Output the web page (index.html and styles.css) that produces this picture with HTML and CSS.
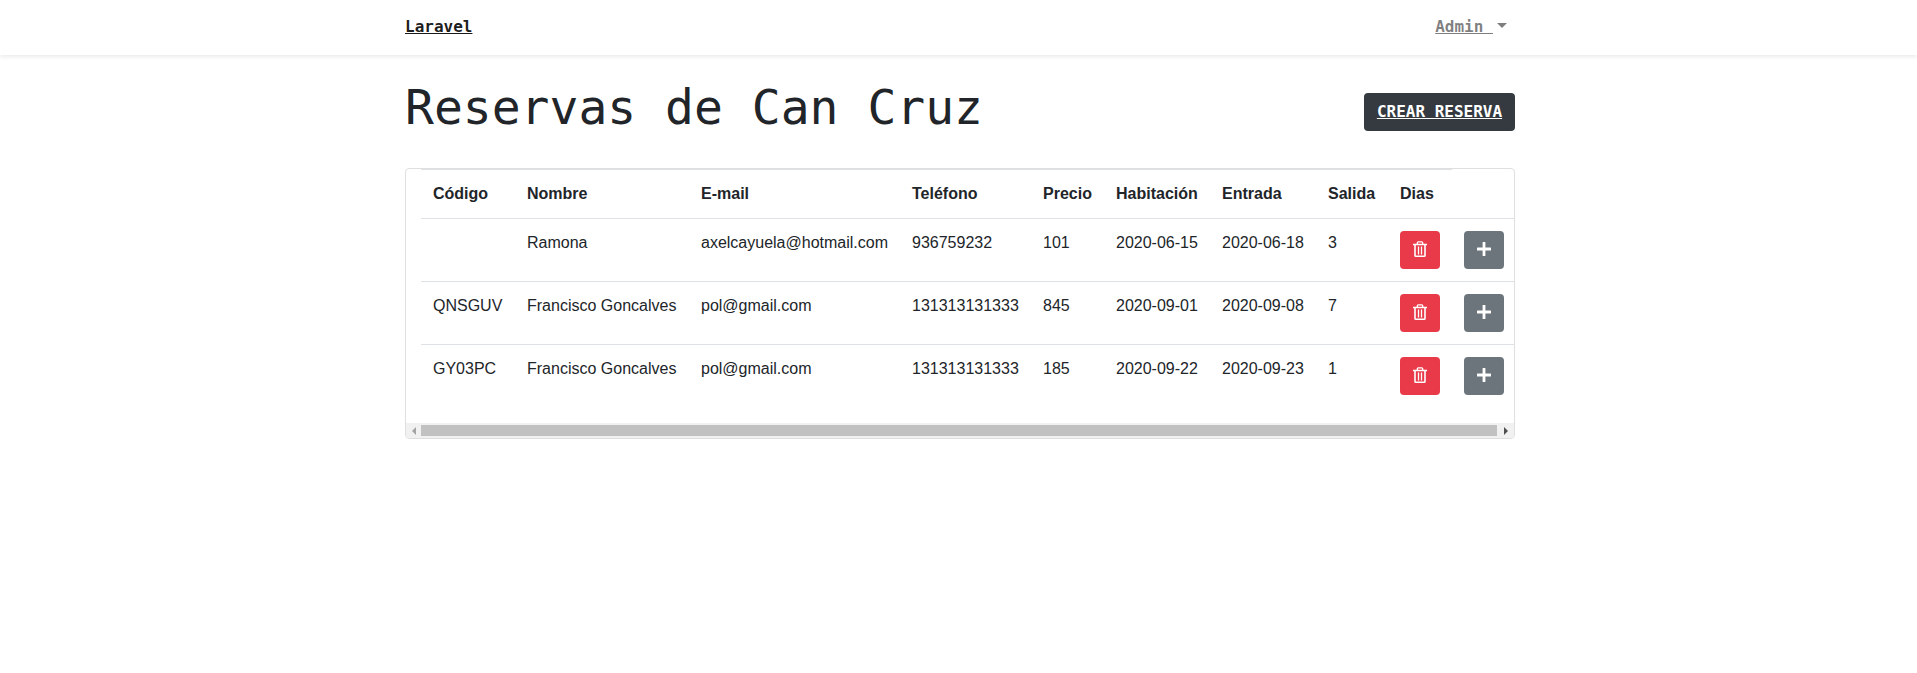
FILE: index.html
```html
<!DOCTYPE html>
<html lang="es">
<head>
<meta charset="utf-8">
<title>Laravel</title>
<link rel="stylesheet" href="styles.css">
</head>
<body>
<svg class="sprite" aria-hidden="true">
  <symbol id="trash" viewBox="0 0 14 16">
    <path d="M4.3 3V1.8q0-.9.9-.9h3.6q.9 0 .9.9V3" fill="none" stroke="currentColor" stroke-width="1.3"/>
    <path d="M0 3.5h14M2 3.5v11q0 .7.8.7h8.4q.8 0 .8-.7v-11" fill="none" stroke="currentColor" stroke-width="1.6"/>
    <path d="M5.5 5.5v8M8.5 5.5v8" fill="none" stroke="currentColor" stroke-width="1.3"/>
  </symbol>
  <symbol id="plus" viewBox="0 0 14 14">
    <path d="M7 .8v12.4M.8 7h12.4" fill="none" stroke="currentColor" stroke-width="2.8" stroke-linecap="round"/>
  </symbol>
</svg>
<nav class="navbar">
  <div class="container navbar-inner">
    <a class="brand" href="#">Laravel</a>
    <a class="user" href="#">Admin <span class="caret"></span></a>
  </div>
</nav>
<main class="container">
  <header class="page-header">
    <h1>Reservas de Can Cruz</h1>
    <a class="btn btn-dark" href="#">CREAR RESERVA</a>
  </header>
  <section class="card">
    <div class="table-area">
      <table>
        <colgroup>
          <col class="c-code"><col class="c-name"><col class="c-mail"><col class="c-phone"><col class="c-price"><col class="c-room"><col class="c-in"><col class="c-out"><col class="c-days"><col class="c-more">
        </colgroup>
        <thead>
          <tr><th>Código</th><th>Nombre</th><th>E-mail</th><th>Teléfono</th><th>Precio</th><th>Habitación</th><th>Entrada</th><th>Salida</th><th>Dias</th></tr>
        </thead>
        <tbody>
          <tr><td></td><td>Ramona</td><td>axelcayuela@hotmail.com</td><td>936759232</td><td>101</td><td>2020-06-15</td><td>2020-06-18</td><td>3</td><td><button class="btn btn-danger"><svg class="i-trash"><use href="#trash"/></svg></button></td><td><button class="btn btn-more"><svg class="i-plus"><use href="#plus"/></svg></button></td></tr>
          <tr><td>QNSGUV</td><td>Francisco Goncalves</td><td>pol@gmail.com</td><td>131313131333</td><td>845</td><td>2020-09-01</td><td>2020-09-08</td><td>7</td><td><button class="btn btn-danger"><svg class="i-trash"><use href="#trash"/></svg></button></td><td><button class="btn btn-more"><svg class="i-plus"><use href="#plus"/></svg></button></td></tr>
          <tr><td>GY03PC</td><td>Francisco Goncalves</td><td>pol@gmail.com</td><td>131313131333</td><td>185</td><td>2020-09-22</td><td>2020-09-23</td><td>1</td><td><button class="btn btn-danger"><svg class="i-trash"><use href="#trash"/></svg></button></td><td><button class="btn btn-more"><svg class="i-plus"><use href="#plus"/></svg></button></td></tr>
        </tbody>
      </table>
    </div>
    <div class="scrollbar">
      <span class="arrow arrow-left"></span>
      <span class="thumb"></span>
      <span class="arrow arrow-right"></span>
    </div>
  </section>
</main>
</body>
</html>
```

FILE: styles.css
```css
* { box-sizing: border-box; }

body {
  margin: 0;
  background: #fff;
  color: #212529;
  font: 16px/24px "Liberation Sans", Arial, sans-serif;
  overflow: hidden;
}

.sprite { display: none; }

.container {
  width: 1110px;
  margin-left: 405px;
}

.navbar {
  height: 55px;
  background: #fff;
  box-shadow: 0 2px 4px rgba(0, 0, 0, .08);
}

.navbar-inner {
  display: flex;
  justify-content: space-between;
  align-items: center;
  height: 53px;
  padding-right: 8px;
}

.brand, .user, .btn-dark {
  font-family: "DejaVu Sans Mono", monospace;
  font-weight: 700;
  text-decoration-skip-ink: none;
}

.brand { color: rgba(0, 0, 0, .9); }

.user {
  color: rgba(0, 0, 0, .5);
  white-space: pre;
}

.caret {
  display: inline-block;
  margin-left: 4px;
  vertical-align: 4px;
  border: 5px solid transparent;
  border-top-color: currentColor;
  border-bottom: 0;
}

.page-header {
  display: flex;
  justify-content: space-between;
  height: 113px;
  padding-top: 23px;
}

h1 {
  margin: 0;
  font: 400 48px/58px "DejaVu Sans Mono", monospace;
}

.btn {
  display: flex;
  align-items: center;
  justify-content: center;
  height: 38px;
  padding: 0;
  border: 0;
  border-radius: 4px;
  color: #fff;
}

.btn-dark {
  width: 151px;
  margin-top: 15px;
  background: #343a40;
}

.btn-danger { width: 40px; background: #e93a49; }
.btn-more { width: 40px; background: #6c757b; }

.i-trash { width: 14px; height: 16px; margin-bottom: 2px; }
.i-plus { width: 14px; height: 14px; margin-bottom: 2px; }

.card {
  height: 271px;
  background: #fff;
  border: 1px solid #dfdfdf;
  border-radius: 4px;
  overflow: hidden;
}

.table-area {
  height: 254px;
  padding-left: 15px;
  overflow: hidden;
}

table {
  width: 1095px;
  table-layout: fixed;
  border-collapse: separate;
  border-spacing: 0;
}

.c-code { width: 94px; }
.c-name { width: 174px; }
.c-mail { width: 211px; }
.c-phone { width: 131px; }
.c-price { width: 73px; }
.c-room, .c-in { width: 106px; }
.c-out { width: 72px; }
.c-days, .c-more { width: 64px; }

th, td {
  padding: 12px 0 12px 12px;
  border-top: 1px solid #dee2e6;
  text-align: left;
  vertical-align: top;
  white-space: nowrap;
}

.scrollbar {
  display: flex;
  align-items: center;
  height: 15px;
  background: #f1f1f1;
}

.thumb {
  flex: 1;
  height: 11px;
  background: #c1c1c1;
}

.arrow {
  display: flex;
  align-items: center;
  justify-content: center;
  width: 15px;
  height: 15px;
}

.arrow-right { width: 17px; }

.arrow::before {
  content: "";
  border: 4px solid transparent;
}

.arrow-left::before { border-right-color: #a3a3a3; border-left: 0; }
.arrow-right::before { border-left-color: #505050; border-right: 0; }
```
